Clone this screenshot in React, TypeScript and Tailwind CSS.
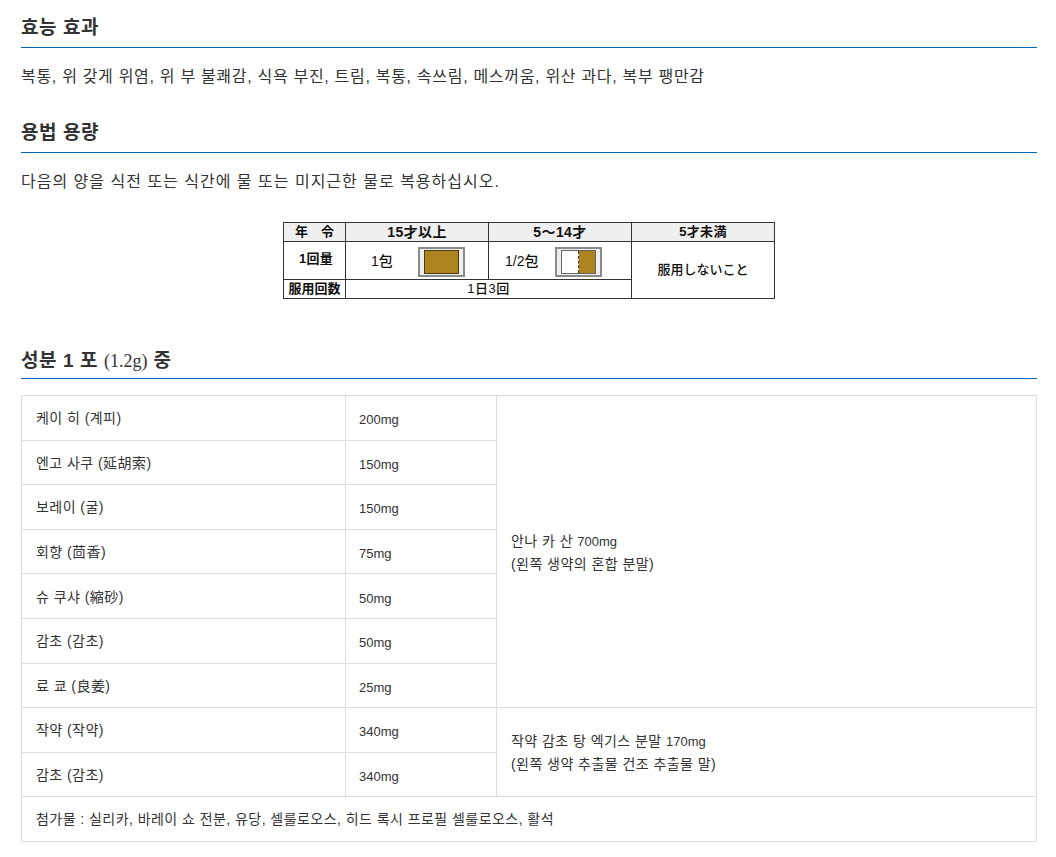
const font = "[font-family:'Liberation_Sans','Noto_Sans_CJK_KR',sans-serif]";

function Heading({ children, className }: { children: React.ReactNode; className: string }) {
  return (
    <h2 className={`border-b border-[#0068b7] text-[19px] leading-[24px] font-bold tracking-[0.6px] text-[#333333] ${className}`}>
      {children}
    </h2>
  );
}

const rows = [
  ["케이 히 (계피)", "200mg"],
  ["엔고 사쿠 (延胡索)", "150mg"],
  ["보레이 (굴)", "150mg"],
  ["회향 (茴香)", "75mg"],
  ["슈 쿠샤 (縮砂)", "50mg"],
  ["감초 (감초)", "50mg"],
  ["료 쿄 (良姜)", "25mg"],
  ["작약 (작약)", "340mg"],
  ["감초 (감초)", "340mg"],
];

function Packet({ half }: { half?: boolean }) {
  return (
    <div className="flex h-[30px] w-[47px] border-2 border-[#8a8a8a] bg-[#eeeeee] px-[4px] py-[1px]">
      {half ? (
        <div className="flex flex-1 border border-[#666666] bg-white">
          <div className="flex-1 border-r border-dashed border-[#333333]" />
          <div className="flex-1 bg-[#ad8320]" />
        </div>
      ) : (
        <div className="flex-1 border border-[#4a3a10] bg-[#ad8320]" />
      )}
    </div>
  );
}

function DosageTable() {
  const cell = "border border-[#333333] text-center align-middle p-0";
  return (
    <table className="mx-auto w-[491px] table-fixed border-collapse text-[13px] font-bold text-[#111111] [font-family:'Liberation_Sans','Noto_Sans_CJK_JP',sans-serif]">
      <colgroup>
        <col className="w-[62px]" />
        <col className="w-[143px]" />
        <col className="w-[143px]" />
        <col className="w-[143px]" />
      </colgroup>
      <tbody>
        <tr className="h-[19px] bg-[#efefef] leading-[16px]">
          <td className={cell}>年　令</td>
          <td className={`${cell} text-[14px] tracking-[0.4px]`}>15才以上</td>
          <td className={`${cell} text-[14px] tracking-[0.4px]`}>5～14才</td>
          <td className={`${cell} tracking-[0.3px]`}>5才未満</td>
        </tr>
        <tr className="h-[38px] bg-white">
          <td className={`${cell} pb-[3px] pl-[3px] tracking-[0.3px]`}>1回量</td>
          <td className={cell}>
            <div className="flex items-center gap-[25px] pl-[25px] pt-[2px] text-[14px] font-medium">
              <span>1包</span>
              <Packet />
            </div>
          </td>
          <td className={cell}>
            <div className="flex items-center gap-[17px] pl-[16px] pt-[2px] text-[14px] font-medium">
              <span>1/2包</span>
              <Packet half />
            </div>
          </td>
          <td className={`${cell} font-medium`} rowSpan={2}>服用しないこと</td>
        </tr>
        <tr className="h-[19px] bg-white leading-[16px]">
          <td className={cell}>服用回数</td>
          <td className={`${cell} font-medium tracking-[0.5px]`} colSpan={2}>1日3回</td>
        </tr>
      </tbody>
    </table>
  );
}

function Amount({ children }: { children: React.ReactNode }) {
  return <span className="text-[13px] tracking-normal">{children}</span>;
}

export default function App() {
  const td = "border border-[#dddddd] pl-[14px] align-middle";
  const tdAmount = "border border-[#dddddd] pl-[13px] align-middle";
  return (
    <div className={`min-h-[857px] bg-white pl-[21px] pr-[19px] pt-[16px] text-[#333333] ${font}`}>
      <Heading className="h-[32px]">효능 효과</Heading>
      <p className="mt-[18px] text-[16px] leading-[22px] tracking-[0.7px]">
        복통, 위 갖게 위염, 위 부 불쾌감, 식욕 부진, 트림, 복통, 속쓰림, 메스꺼움, 위산 과다, 복부 팽만감
      </p>
      <Heading className="mt-[32px] h-[33px] pt-[1px]">용법 용량</Heading>
      <p className="mt-[18px] text-[16px] leading-[22px] tracking-[1px]">
        다음의 양을 식전 또는 식간에 물 또는 미지근한 물로 복용하십시오.
      </p>
      <div className="mt-[29px]">
        <DosageTable />
      </div>
      <Heading className="mt-[50px] h-[30px]">
        성분 1 포 <span className="font-['Liberation_Serif',serif] text-[18px] font-normal tracking-normal">(1.2g)</span> 중
      </Heading>
      <table className="mt-[16px] w-full table-fixed border-collapse text-[14px] tracking-[0.45px] text-[#333333]">
        <colgroup>
          <col className="w-[324px]" />
          <col className="w-[151px]" />
          <col />
        </colgroup>
        <tbody>
          {rows.map(([name, amount], i) => (
            <tr key={i} className="h-[44.6px]">
              <td className={`${td} pt-[4px]`}><span className="relative top-[-1px]">{name}</span></td>
              <td className={`${tdAmount} pt-[4px]`}><Amount>{amount}</Amount></td>
              {i === 0 && (
                <td className={`${td} pt-[2px] leading-[22px]`} rowSpan={7}>
                  안나 카 산 <Amount>700mg</Amount><br />(왼쪽 생약의 혼합 분말)
                </td>
              )}
              {i === 7 && (
                <td className={`${td} leading-[22px]`} rowSpan={2}>
                  작약 감초 탕 엑기스 분말 <Amount>170mg</Amount><br />(왼쪽 생약 추출물 건조 추출물 말)
                </td>
              )}
            </tr>
          ))}
          <tr className="h-[45px]">
            <td className={td} colSpan={3}>
              첨가물 : 실리카, 바레이 쇼 전분, 유당, 셀룰로오스, 히드 록시 프로필 셀룰로오스, 활석
            </td>
          </tr>
        </tbody>
      </table>
    </div>
  );
}
